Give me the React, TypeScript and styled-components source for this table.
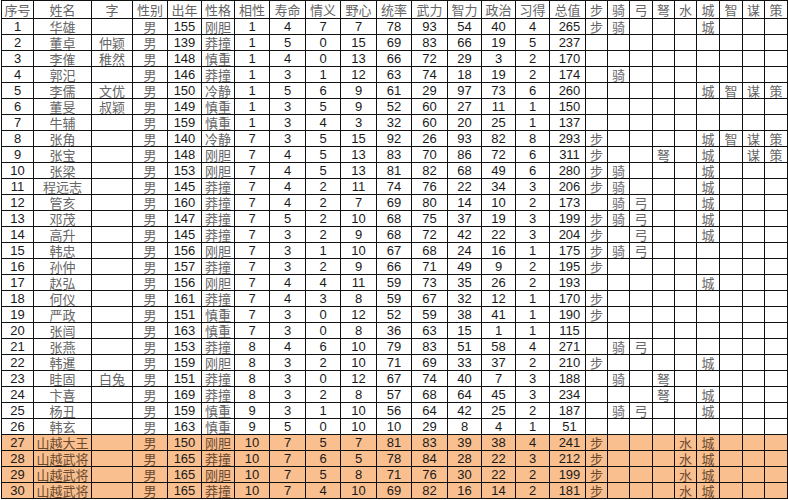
import React from "react";
import styled, { createGlobalStyle } from "styled-components";

const GlobalStyle = createGlobalStyle`
  html, body {
    margin: 0;
    padding: 0;
    background: #ffffff;
  }
`;

const columns = [
  { title: "序号", width: 32, kind: "num" },
  { title: "姓名", width: 58, kind: "cjk" },
  { title: "字", width: 41, kind: "cjk" },
  { title: "性别", width: 35, kind: "cjk" },
  { title: "出年", width: 34, kind: "num" },
  { title: "性格", width: 33, kind: "cjk" },
  { title: "相性", width: 35, kind: "num" },
  { title: "寿命", width: 36, kind: "num" },
  { title: "情义", width: 35, kind: "num" },
  { title: "野心", width: 36, kind: "num" },
  { title: "统率", width: 35, kind: "num" },
  { title: "武力", width: 36, kind: "num" },
  { title: "智力", width: 34, kind: "num" },
  { title: "政治", width: 34, kind: "num" },
  { title: "习得", width: 34, kind: "num" },
  { title: "总值", width: 36, kind: "total" },
  { title: "步", width: 22, kind: "cjk" },
  { title: "骑", width: 22, kind: "cjk" },
  { title: "弓", width: 23, kind: "cjk" },
  { title: "弩", width: 22, kind: "cjk" },
  { title: "水", width: 22, kind: "cjk" },
  { title: "城", width: 23, kind: "cjk" },
  { title: "智", width: 23, kind: "cjk" },
  { title: "谋", width: 22, kind: "cjk" },
  { title: "策", width: 23, kind: "cjk" },
];

// 序号 姓名 字 出年 性格 相性 寿命 情义 野心 统率 武力 智力 政治 习得 总值 | 兵种/特技
const raw = `
1|华雄||155|刚胆|1|4|7|7|78|93|54|40|4|265|步,骑,,,,城
2|董卓|仲颖|139|莽撞|1|5|0|15|69|83|66|19|5|237|
3|李傕|稚然|148|慎重|1|4|0|13|66|72|29|3|2|170|
4|郭汜||146|莽撞|1|3|1|12|63|74|18|19|2|174|,骑
5|李儒|文优|150|冷静|1|5|6|9|61|29|97|73|6|260|,,,,,城,智,谋,策
6|董旻|叔颖|149|慎重|1|3|5|9|52|60|27|11|1|150|
7|牛辅||159|慎重|1|3|4|3|32|60|20|25|1|137|
8|张角||140|冷静|7|3|5|15|92|26|93|82|8|293|步,,,,,城,智,谋,策
9|张宝||148|刚胆|7|4|5|13|83|70|86|72|6|311|步,,,弩,,城,,谋,策
10|张梁||153|刚胆|7|4|5|13|81|82|68|49|6|280|步,骑,,,,城
11|程远志||145|莽撞|7|4|2|11|74|76|22|34|3|206|步,骑,,,,城
12|管亥||160|莽撞|7|4|2|7|69|80|14|10|2|173|,骑,弓,,,城
13|邓茂||147|莽撞|7|5|2|10|68|75|37|19|3|199|步,骑,弓,,,城
14|高升||145|莽撞|7|3|2|9|68|72|42|22|3|204|步,,弓,,,城
15|韩忠||156|刚胆|7|3|1|10|67|68|24|16|1|175|步,骑,弓
16|孙仲||157|莽撞|7|3|2|9|66|71|49|9|2|195|步
17|赵弘||156|刚胆|7|4|4|11|59|73|35|26|2|193|,,,,,城
18|何仪||161|莽撞|7|4|3|8|59|67|32|12|1|170|步
19|严政||151|慎重|7|3|0|12|52|59|38|41|1|190|步
20|张闿||163|慎重|7|3|0|8|36|63|15|1|1|115|
21|张燕||153|莽撞|8|4|6|10|79|83|51|58|4|271|,骑,弓
22|韩暹||159|刚胆|8|3|2|10|71|69|33|37|2|210|步,,,,,城
23|眭固|白兔|151|莽撞|8|3|0|12|67|74|40|7|3|188|,骑,,弩
24|卞喜||169|莽撞|8|3|2|8|57|68|64|45|3|234|,,,弩,,城
25|杨丑||159|慎重|9|3|1|10|56|64|42|25|2|187|,骑,弓,,,城
26|韩玄||163|慎重|9|5|0|10|10|29|8|4|1|51|
27|山越大王||150|刚胆|10|7|5|7|81|83|39|38|4|241|步,,,,水,城
28|山越武将||165|莽撞|10|7|6|5|78|84|28|22|3|212|步,,,,水,城
29|山越武将||165|刚胆|10|7|5|8|71|76|30|22|2|199|步,,,,水,城
30|山越武将||165|莽撞|10|7|4|10|69|82|16|14|2|181|步,,,,水,城
`;

const rows = raw
  .trim()
  .split("\n")
  .map((line) => {
    const p = line.split("|");
    const skills = p[15].split(",");
    const cells = [p[0], p[1], p[2], "男", ...p.slice(3, 15)];
    for (let i = 0; i < 9; i++) cells.push(skills[i] || "");
    return { cells, highlight: Number(p[0]) >= 27 };
  });

const Sheet = styled.table`
  margin-left: 1px;
  width: 786px;
  table-layout: fixed;
  border-collapse: collapse;
  background: #ffffff;
`;

const HeadRow = styled.tr`
  height: 18px;
`;

const BodyRow = styled.tr<{ $hl: boolean }>`
  height: 16px;
  background: ${(p) => (p.$hl ? "#f9bf8f" : "#ffffff")};
`;

const HeadCell = styled.th`
  border: 1px solid #111;
  padding: 0;
  font-family: "Noto Sans CJK SC", "Noto Sans", sans-serif;
  font-weight: 400;
  font-size: 13px;
  line-height: 16px;
  color: #666666;
  text-align: center;
  white-space: nowrap;
  overflow: hidden;
`;

const Cell = styled.td<{ $kind: string; $hl: boolean }>`
  border: 1px solid #111;
  padding: ${(p) => (p.$kind === "total" ? "0 2px 0 6px" : "0")};
  height: 15px;
  font-family: ${(p) =>
    p.$kind === "cjk"
      ? `"Noto Sans CJK SC", "Noto Sans", sans-serif`
      : `"Liberation Sans", Arial, sans-serif`};
  font-size: 13px;
  line-height: 14px;
  color: ${(p) =>
    p.$kind === "cjk" ? (p.$hl ? "#6a4a30" : "#666666") : "#1a1a1a"};
  text-align: center;
  white-space: nowrap;
  overflow: hidden;
`;

export default function App() {
  return (
    <>
      <GlobalStyle />
      <Sheet>
        <colgroup>
          {columns.map((c, i) => (
            <col key={i} style={{ width: c.width }} />
          ))}
        </colgroup>
        <thead>
          <HeadRow>
            {columns.map((c) => (
              <HeadCell key={c.title}>{c.title}</HeadCell>
            ))}
          </HeadRow>
        </thead>
        <tbody>
          {rows.map((r) => (
            <BodyRow key={r.cells[0]} $hl={r.highlight}>
              {r.cells.map((v, i) => (
                <Cell key={i} $kind={columns[i].kind} $hl={r.highlight}>
                  {v}
                </Cell>
              ))}
            </BodyRow>
          ))}
        </tbody>
      </Sheet>
    </>
  );
}
